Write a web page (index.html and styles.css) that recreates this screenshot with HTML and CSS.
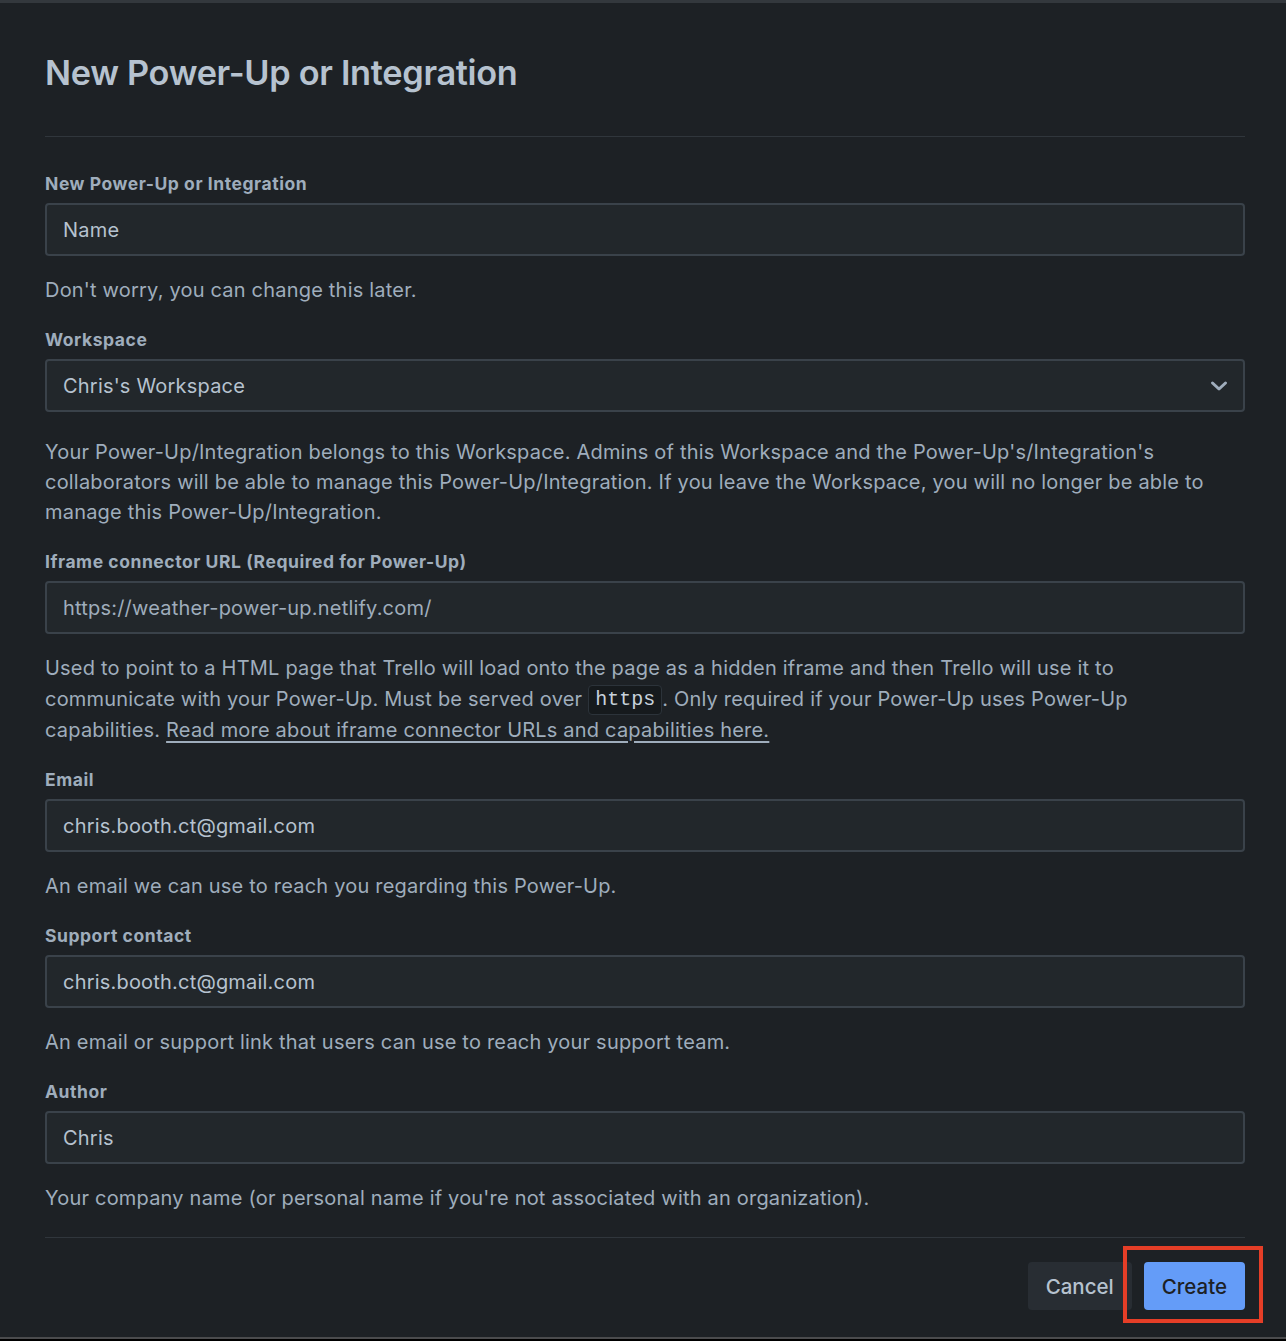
FILE: index.html
```html
<!DOCTYPE html>
<html lang="en">
<head>
<meta charset="utf-8">
<title>New Power-Up or Integration</title>
<link rel="stylesheet" href="styles.css">
</head>
<body>
<div class="dialog">
  <header class="header">
    <h1 class="title">New Power-Up or Integration</h1>
  </header>
  <form class="form">
    <div class="field">
      <label class="label">New Power-Up or Integration</label>
      <div class="input">Name</div>
      <p class="help">Don't worry, you can change this later.</p>
    </div>
    <div class="field">
      <label class="label">Workspace</label>
      <div class="input select">
        <span>Chris's Workspace</span>
        <svg class="chevron" width="18" height="12" viewBox="0 0 18 12"><path d="M2.5 3 L9 9 L15.5 3" fill="none" stroke="#9fadbc" stroke-width="3" stroke-linecap="round" stroke-linejoin="round"/></svg>
      </div>
      <p class="help help-wide">Your Power-Up/Integration belongs to this Workspace. Admins of this Workspace and the Power-Up's/Integration's collaborators will be able to manage this Power-Up/Integration. If you leave the Workspace, you will no longer be able to manage this Power-Up/Integration.</p>
    </div>
    <div class="field">
      <label class="label">Iframe connector URL (Required for Power-Up)</label>
      <div class="input dim">https://weather-power-up.netlify.com/</div>
      <p class="help help-code">Used to point to a HTML page that Trello will load onto the page as a hidden iframe and then Trello will use it to communicate with your Power-Up. Must be served over <code class="code">https</code>. Only required if your Power-Up uses Power-Up capabilities. <a class="link" href="#">Read more about iframe connector URLs and capabilities here.</a></p>
    </div>
    <div class="field">
      <label class="label">Email</label>
      <div class="input">chris.booth.ct@gmail.com</div>
      <p class="help">An email we can use to reach you regarding this Power-Up.</p>
    </div>
    <div class="field">
      <label class="label">Support contact</label>
      <div class="input">chris.booth.ct@gmail.com</div>
      <p class="help">An email or support link that users can use to reach your support team.</p>
    </div>
    <div class="field">
      <label class="label">Author</label>
      <div class="input">Chris</div>
      <p class="help">Your company name (or personal name if you're not associated with an organization).</p>
    </div>
  </form>
  <footer class="footer">
    <button class="btn btn-cancel" type="button">Cancel</button>
    <button class="btn btn-create" type="button">Create</button>
  </footer>
</div>
</body>
</html>
```
FILE: styles.css
```css
*, *::before, *::after { box-sizing: border-box; }
html, body {
  margin: 0;
  padding: 0;
  background: #000;
}
body {
  font-family: Inter, "Noto Sans", sans-serif;
  color: #9fadbc;
}
.dialog {
  background: #1d2125;
  border-top: 3px solid #33383d;
  border-bottom: 2px solid #4a4b4d;
  padding: 0 41px 27px 45px;
}
.header {
  padding-top: 48px;
  padding-bottom: 41px;
  border-bottom: 1px solid #30363c;
}
.title {
  margin: 0;
  font-size: 34.3px;
  line-height: 44px;
  font-weight: 600;
  color: #b6c2cf;
  letter-spacing: -0.3px;
}
.form {
  padding-top: 37px;
}
.field + .field {
  margin-top: 25px;
}
.label {
  display: block;
  font-size: 17.5px;
  line-height: 20px;
  font-weight: 700;
  letter-spacing: 0.55px;
  color: #9fadbc;
  margin-bottom: 9px;
}
.input {
  height: 53px;
  border: 2px solid #3a424a;
  border-radius: 4px;
  background: #22272b;
  padding: 0 16px;
  display: flex;
  align-items: center;
  font-size: 20px;
  letter-spacing: 0.2px;
  color: #b6c2cf;
}
.input.dim { color: #9fadbc; }
.select {
  justify-content: space-between;
  padding-right: 15px;
}
.chevron { display: block; }
.help {
  margin: 19px 0 0;
  font-size: 20px;
  letter-spacing: 0.2px;
  line-height: 30px;
  color: #9fadbc;
}
.help-wide { margin-top: 25px; }
.help-code { line-height: 30.5px; }
.code {
  display: inline-block;
  font-family: "Liberation Mono", "DejaVu Sans Mono", monospace;
  font-size: 20px;
  line-height: 26px;
  letter-spacing: 0;
  color: #c7d1db;
  background: #161a1d;
  border: 1px solid #2c333a;
  border-radius: 4px;
  padding: 1px 6px;
  vertical-align: 1px;
}
.link {
  color: #9fadbc;
  text-decoration: underline;
  text-underline-offset: 4px;
}
.footer {
  margin-top: 24px;
  border-top: 1px solid #30363c;
  padding-top: 24px;
  display: flex;
  justify-content: flex-end;
  gap: 12px;
}
.btn {
  height: 48px;
  border: none;
  border-radius: 4px;
  padding: 0 18px;
  font-family: Inter, "Noto Sans", sans-serif;
  font-size: 20.5px;
  font-weight: 500;
  letter-spacing: 0;
  cursor: pointer;
}
.btn-cancel {
  background: #282d33;
  color: #b6c2cf;
}
.btn-create {
  position: relative;
  background: #649cf8;
  color: #1d2125;
}
.btn-create::after {
  content: "";
  position: absolute;
  left: -21px;
  top: -16px;
  width: 140px;
  height: 77px;
  border: 4px solid #e53e27;
}
```
